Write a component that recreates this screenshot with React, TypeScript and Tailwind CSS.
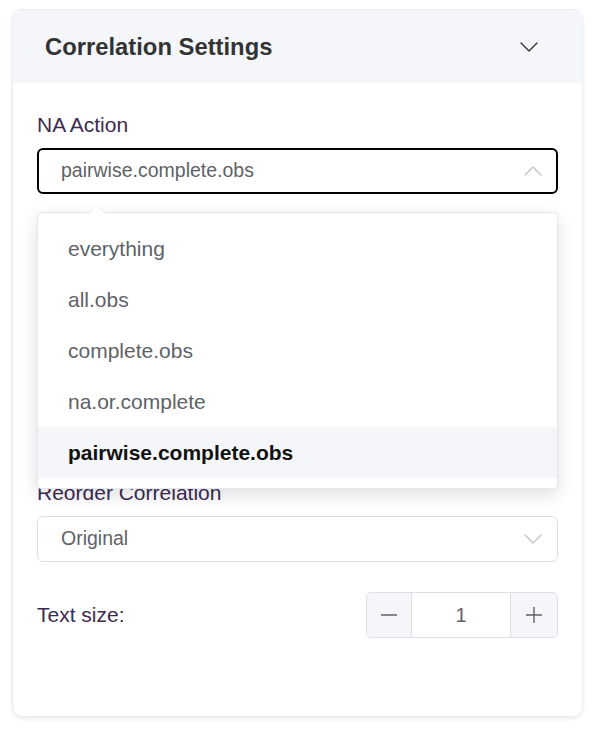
import React from "react";

const options = ["everything", "all.obs", "complete.obs", "na.or.complete", "pairwise.complete.obs"];
const selected = "pairwise.complete.obs";

function Chevron({ up = false, className = "" }: { up?: boolean; className?: string }) {
  return (
    <svg width="18" height="10" viewBox="0 0 18 10" className={className} fill="none">
      <polyline
        points={up ? "1,9 9,1 17,9" : "1,1 9,9 17,1"}
        stroke="currentColor"
        strokeWidth="1.4"
        strokeLinecap="round"
        strokeLinejoin="round"
      />
    </svg>
  );
}

export default function App() {
  return (
    <div
      className="min-h-[729px] bg-white pl-[12px] pt-[9px]"
      style={{ fontFamily: '"Liberation Sans", Arial, sans-serif' }}
    >
      <div className="w-[571px] rounded-[10px] border border-[#e9ecf2] bg-white shadow-[0_2px_4px_rgba(0,0,0,0.07)]">
        <div className="flex h-[73px] items-center justify-between rounded-t-[10px] bg-[#f5f6fa] pl-[32px] pr-[44px]">
          <h2 className="text-[23.8px] font-bold text-[#333333]">Correlation Settings</h2>
          <Chevron className="text-[#333333]" />
        </div>

        <div className="px-[24px] pt-[30px] pb-[78px]">
          <label className="mb-[11px] block text-[21px] leading-6 text-[#3d2b52]">NA Action</label>
          <div className="relative">
            <div className="flex h-[46px] items-center justify-between rounded-[6px] border-2 border-black pl-[22px] pr-[14px]">
              <span className="text-[19.5px] text-[#606266]">pairwise.complete.obs</span>
              <Chevron up className="text-[#c0c4cc]" />
            </div>

            <div className="absolute left-0 right-0 top-[64px] z-10 rounded-[4px] border border-[#e4e7ed] bg-white py-[10px] shadow-[0_6px_18px_rgba(0,0,0,0.13)]">
              <svg
                width="14"
                height="7"
                viewBox="0 0 14 7"
                className="absolute left-[52px] top-[-7px]"
              >
                <polygon points="0,7 7,0 14,7" fill="#ffffff" />
                <polyline points="0,7 7,0 14,7" fill="none" stroke="#eef0f4" strokeWidth="1" />
              </svg>
              {options.map((o) => (
                <div
                  key={o}
                  className={
                    o === selected
                      ? "flex h-[51px] items-center bg-[#f5f6fa] px-[30px] text-[21px] font-bold text-[#111111]"
                      : "flex h-[51px] items-center px-[30px] text-[21px] text-[#606266]"
                  }
                >
                  {o}
                </div>
              ))}
            </div>
          </div>

          <label className="mt-[287px] mb-[11px] block text-[21px] leading-6 text-[#3d2b52]">
            Reorder Correlation
          </label>
          <div className="flex h-[46px] items-center justify-between rounded-[6px] border border-[#dcdfe6] pl-[23px] pr-[15px]">
            <span className="text-[19.5px] text-[#606266]">Original</span>
            <Chevron className="text-[#c0c4cc]" />
          </div>

          <div className="mt-[30px] flex h-[46px] items-center justify-between">
            <span className="text-[21px] text-[#3d2b52]">Text size:</span>
            <div className="flex h-[46px] w-[192px] overflow-hidden rounded-[5px] border border-[#dcdfe6]">
              <div className="flex w-[45px] items-center justify-center border-r border-[#dcdfe6] bg-[#f5f6fa]">
                <svg width="16" height="2" viewBox="0 0 16 2">
                  <line x1="0" y1="1" x2="16" y2="1" stroke="#606266" strokeWidth="1.4" />
                </svg>
              </div>
              <div className="flex flex-1 items-center justify-center bg-white text-[20px] text-[#606266]">1</div>
              <div className="flex w-[47px] items-center justify-center border-l border-[#dcdfe6] bg-[#f5f6fa]">
                <svg width="16" height="16" viewBox="0 0 16 16">
                  <line x1="0" y1="8" x2="16" y2="8" stroke="#606266" strokeWidth="1.4" />
                  <line x1="8" y1="0" x2="8" y2="16" stroke="#606266" strokeWidth="1.4" />
                </svg>
              </div>
            </div>
          </div>
        </div>
      </div>
    </div>
  );
}
